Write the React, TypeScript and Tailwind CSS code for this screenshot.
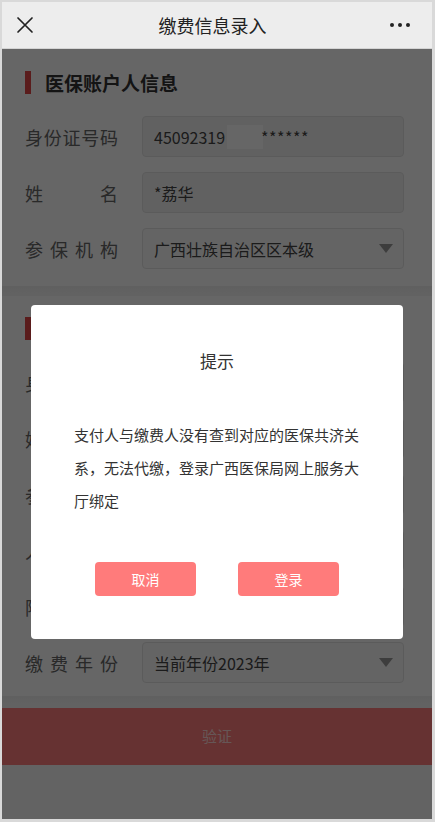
import React from "react";

const FONT = { fontFamily: '"Noto Sans CJK SC", "Noto Sans", sans-serif' };

function Caret() {
  return (
    <svg width="14" height="9" viewBox="0 0 14 9" className="shrink-0">
      <path d="M0 0 H14 L7 9 Z" fill="#999" />
    </svg>
  );
}

interface FieldProps {
  label: string;
  children?: React.ReactNode;
  select?: boolean;
}

function Field({ label, children, select }: FieldProps) {
  return (
    <div className="flex h-[41px] items-center">
      <div className="w-[93px] shrink-0 text-[18px] leading-none text-[#666] [text-align-last:justify]">
        {label}
      </div>
      <div
        className={
          select
            ? "ml-[24px] flex h-full flex-1 items-center justify-between rounded-[4px] border border-[#e4e4e4] bg-[#fafafa] pl-[11px] pr-[10px] text-[16px] text-[#444]"
            : "ml-[24px] flex h-full flex-1 items-center rounded-[4px] border border-[#e4e4e4] bg-[#f3f3f3] px-[11px] text-[16px] text-[#444]"
        }
      >
        {children}
        {select ? <Caret /> : null}
      </div>
    </div>
  );
}

function SectionTitle({ title }: { title: string }) {
  return (
    <div className="flex items-center gap-[14px]">
      <div className="h-[23px] w-[6px] bg-[#e04848]" />
      <h2 className="text-[19px] font-bold leading-none text-[#333]">{title}</h2>
    </div>
  );
}

export default function App() {
  return (
    <div
      className="box-border flex h-[822px] w-[435px] flex-col overflow-hidden border-t-2 border-r-[3px] border-b-[3px] border-l-2 border-[#d9d9d9] bg-white"
      style={FONT}
    >
      {/* nav bar */}
      <div className="flex h-[47px] shrink-0 items-center justify-between border-b border-[#d4d4d4] bg-[#ededed] pl-[13px] pr-[22px]">
        <svg width="20" height="20" viewBox="0 0 20 20">
          <path d="M3 3 L17 17 M17 3 L3 17" stroke="#222" strokeWidth="1.7" strokeLinecap="round" />
        </svg>
        <span className="text-[18px] font-normal text-[#222]">缴费信息录入</span>
        <div className="flex w-[20px] items-center justify-between">
          <span className="h-[4px] w-[4px] rounded-full bg-[#222]" />
          <span className="h-[4px] w-[4px] rounded-full bg-[#222]" />
          <span className="h-[4px] w-[4px] rounded-full bg-[#222]" />
        </div>
      </div>

      {/* page */}
      <div className="relative flex flex-1 flex-col bg-[#f7f7f7]">
        <section className="flex flex-col bg-white pl-[23px] pr-[28px] pt-[22px] pb-[17px]">
          <SectionTitle title="医保账户人信息" />
          <div className="mt-[22px] flex flex-col gap-[15px]">
            <Field label="身份证号码">
              <span>45092319</span>
              <span className="ml-[2px] h-[24px] w-[36px] bg-white" />
              <span className="-ml-[2px] tracking-[0.5px]">******</span>
            </Field>
            <Field label="姓名">
              <span>*荔华</span>
            </Field>
            <Field label="参保机构" select>
              <span>广西壮族自治区区本级</span>
            </Field>
          </div>
        </section>
        <div className="h-[10px] bg-gradient-to-b from-[#f0f0f0] to-[#f6f6f6]" />
        <section className="flex flex-col bg-white pl-[23px] pr-[28px] pt-[21px] pb-[13px]">
          <SectionTitle title="缴费人信息" />
          <div className="mt-[22px] flex flex-col gap-[15px]">
            <Field label="身份证号码" />
            <Field label="姓名" />
            <Field label="参保机构" select />
            <Field label="人员类别" select />
            <Field label="险种类型" select />
            <Field label="缴费年份" select>
              <span>当前年份2023年</span>
            </Field>
          </div>
        </section>
        <div className="h-[12px] bg-gradient-to-b from-[#f0f0f0] to-[#f6f6f6]" />
        <button className="flex h-[57px] items-center justify-center bg-[#ff7d7d] text-[15px] text-[#ffd8d8]">
          验证
        </button>

        {/* mask */}
        <div className="absolute inset-0 bg-black/60" />

        {/* dialog */}
        <div className="absolute top-[256px] left-[29px] flex h-[334px] w-[372px] flex-col items-center rounded-[4px] bg-white">
          <h3 className="mt-[44px] text-[17px] leading-[24px] text-[#333]">提示</h3>
          <p className="mt-[45px] w-full px-[43px] text-[15px] leading-[33px] text-[#333]">
            支付人与缴费人没有查到对应的医保共济关系，无法代缴，登录广西医保局网上服务大厅绑定
          </p>
          <div className="mt-[45px] flex gap-[42px]">
            <button className="h-[34px] w-[101px] rounded-[4px] bg-[#ff7b7b] text-[14px] text-white">取消</button>
            <button className="h-[34px] w-[101px] rounded-[4px] bg-[#ff7b7b] text-[14px] text-white">登录</button>
          </div>
        </div>
      </div>
    </div>
  );
}
